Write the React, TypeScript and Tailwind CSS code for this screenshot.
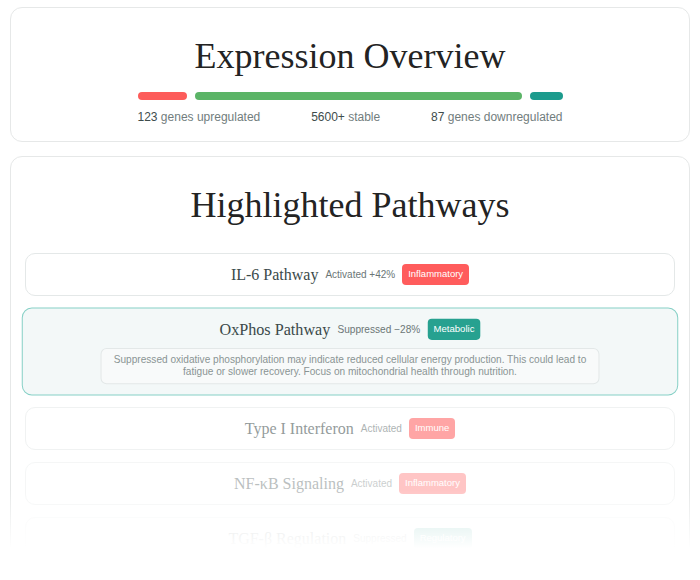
import React from 'react';

interface Pathway {
  name: string;
  status: string;
  tag: string;
  tagClass: string;
  fade: string;
  selected?: boolean;
  description?: string;
}

const pathways: Pathway[] = [
  { name: 'IL-6 Pathway', status: 'Activated +42%', tag: 'Inflammatory', tagClass: 'bg-[#ff5c5c]', fade: 'opacity-100' },
  {
    name: 'OxPhos Pathway',
    status: 'Suppressed −28%',
    tag: 'Metabolic',
    tagClass: 'bg-[#27a190]',
    fade: 'opacity-100',
    selected: true,
    description:
      'Suppressed oxidative phosphorylation may indicate reduced cellular energy production. This could lead to fatigue or slower recovery. Focus on mitochondrial health through nutrition.',
  },
  { name: 'Type I Interferon', status: 'Activated', tag: 'Immune', tagClass: 'bg-[#ff5c5c]', fade: 'opacity-55' },
  { name: 'NF-κB Signaling', status: 'Activated', tag: 'Inflammatory', tagClass: 'bg-[#ff5c5c]', fade: 'opacity-35' },
  { name: 'TGF-β Regulation', status: 'Suppressed', tag: 'Regulatory', tagClass: 'bg-[#27a190]', fade: 'opacity-25' },
];

const PathwayRow: React.FC<{ p: Pathway }> = ({ p }) => (
  <div
    className={`rounded-[10px] border px-4 py-[10px] ${p.fade} ${
      p.selected ? 'scale-[1.01] border-[#86d0c6] bg-[#f3f8f8]' : 'border-[#e4e8e8] bg-white'
    }`}
  >
    <div className="flex items-center justify-center gap-[7px]">
      <span className="font-['Liberation_Serif',serif] text-[16px] leading-5 text-[#3b4a4a]">{p.name}</span>
      <span className="text-[10px] text-[#6b7676]">{p.status}</span>
      <span className={`flex h-[21px] items-center rounded-[4px] px-[6px] text-[9.5px] font-medium text-white ${p.tagClass}`}>
        {p.tag}
      </span>
    </div>
    {p.description && (
      <div className="mx-auto mt-2 w-[494px] rounded-md border border-[#e3e8e8] bg-[#f8fafa] px-2 py-[5px] text-center text-[10px] leading-[12px] text-[#8a9494]">
        {p.description}
      </div>
    )}
  </div>
);

export default function App() {
  return (
    <div className="relative h-[580px] overflow-hidden bg-white px-[10px] pt-[7px] font-['Liberation_Sans',sans-serif]">
      {/* Expression overview */}
      <section className="flex flex-col items-center rounded-xl border border-[#e6e8e8] bg-white pt-[26px] pb-[16px]">
        <h1 className="font-['Liberation_Serif',serif] text-[36px] leading-[44px] text-[#232323]">Expression Overview</h1>
        <div className="mt-[14px] w-[425px]">
          <div className="flex h-2 gap-2">
            <div className="w-[49px] rounded-full bg-[#fd5c5a]" />
            <div className="flex-1 rounded-full bg-[#5bb467]" />
            <div className="w-[33px] rounded-full bg-[#1c9b8d]" />
          </div>
          <div className="mt-[9px] flex justify-between text-[12px] leading-4 text-[#717d7d]">
            <span>
              <span className="text-[#3e4c4c]">123</span> genes upregulated
            </span>
            <span>
              <span className="text-[#3e4c4c]">5600+</span> stable
            </span>
            <span>
              <span className="text-[#3e4c4c]">87</span> genes downregulated
            </span>
          </div>
        </div>
      </section>

      {/* Highlighted pathways */}
      <section className="mt-[14px] rounded-xl border border-[#e6e8e8] bg-white px-[14px] pt-[26px] pb-6">
        <h2 className="text-center font-['Liberation_Serif',serif] text-[36px] leading-[44px] text-[#232323]">
          Highlighted Pathways
        </h2>
        <div className="mt-[26px] flex flex-col gap-[12px]">
          {pathways.map((p) => (
            <PathwayRow key={p.name} p={p} />
          ))}
        </div>
      </section>

      {/* bottom fade */}
      <div className="pointer-events-none absolute inset-x-0 bottom-0 h-[90px] bg-linear-to-b from-white/0 via-white via-65% to-white" />
    </div>
  );
}
